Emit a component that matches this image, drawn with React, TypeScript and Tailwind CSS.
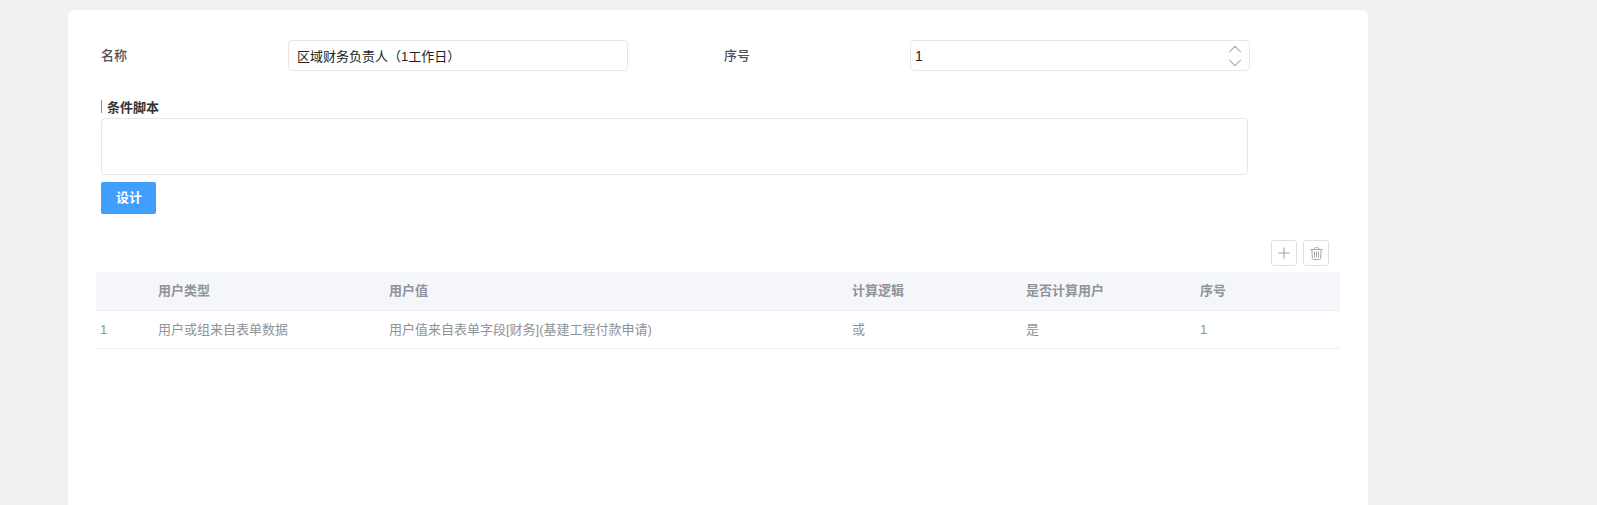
import { ChevronUp, ChevronDown, Plus } from "lucide-react";

const headers = ["", "用户类型", "用户值", "计算逻辑", "是否计算用户", "序号"];
const row = ["1", "用户或组来自表单数据", "用户值来自表单字段[财务](基建工程付款申请)", "或", "是", "1"];

function TrashIcon() {
    return (
        <svg width="13" height="13" viewBox="0 0 13 13" fill="none" stroke="#a3a7ad" strokeWidth="1">
            <path d="M.5 2.5h12M4 2.5C4 1.2 4.8.5 6.5.5S9 1.2 9 2.5" />
            <path d="M1.8 2.5l.6 9c0 .6.4 1 1 1h6.2c.6 0 1-.4 1-1l.6-9" />
            <path d="M4.5 4.5v6M6.5 4.5v6M8.5 4.5v6" />
        </svg>
    );
}

export default function App() {
    return (
        <div className="h-[505px] overflow-hidden bg-[#f1f1f1] pl-[68px] pt-[10px] font-['Liberation_Sans','Noto_Sans_CJK_SC',sans-serif] text-[13px]">
            <div className="h-[600px] w-[1300px] rounded-[6px] bg-white pl-[28px] pr-[28px] pt-[30px]">
                <div className="flex items-center pl-[5px]">
                    <div className="w-[187px] pt-[1px] font-medium text-[#505257]">名称</div>
                    <div className="flex h-[31px] w-[340px] items-center rounded-[4px] border border-[#e8e8e2] pl-[8px] pt-[2px] text-[13px] text-[#222]">
                        区域财务负责人（1工作日）
                    </div>
                    <div className="ml-[96px] w-[186px] pt-[1px] font-medium text-[#505257]">序号</div>
                    <div className="relative flex h-[31px] w-[340px] items-center rounded-[4px] border border-[#e8e8e2] pl-[4px] pt-[2px] text-[14px] text-[#222]">
                        1
                        <div className="absolute right-[3px] top-0 flex h-full flex-col items-center justify-center pt-[1px] text-[#b4b4b4]">
                            <ChevronUp size={22} strokeWidth={1.2} className="-mb-[4px] shrink-0" />
                            <ChevronDown size={22} strokeWidth={1.2} className="-mt-[4px] shrink-0" />
                        </div>
                    </div>
                </div>

                <div className="mt-[29px] pl-[5px]">
                    <div className="h-[13px] border-l border-[#409eff] pl-[5px] text-[13px] font-bold leading-[15px] text-[#333]">条件脚本</div>
                    <div className="mt-[5px] h-[57px] w-[1147px] rounded-[4px] border border-[#e8e8e2]" />
                    <button className="mt-[7px] flex h-[32px] w-[55px] items-center justify-center rounded-[2px] bg-[#409eff] pl-[1px] font-bold text-white">
                        设计
                    </button>
                </div>

                <div className="mt-[26px] flex justify-end gap-[6px] pr-[11px]">
                    <div className="flex h-[26px] w-[26px] items-center justify-center rounded-[3px] border border-[#dcdfe6] text-[#9a9ea5]">
                        <Plus size={18} strokeWidth={1.4} />
                    </div>
                    <div className="flex h-[26px] w-[26px] items-center justify-center rounded-[3px] border border-[#dcdfe6]">
                        <TrashIcon />
                    </div>
                </div>

                <div className="mt-[6px]">
                    <div className="grid h-[39px] grid-cols-[58px_231px_463px_174px_174px_144px] items-center border-b border-[#ebeef5] bg-[#f5f6fa] font-bold text-[#909399]">
                        {headers.map((h, i) => (
                            <div key={i} className="pl-[4px]">{h}</div>
                        ))}
                    </div>
                    <div className="grid h-[38px] grid-cols-[58px_231px_463px_174px_174px_144px] items-center border-b border-[#ebeef5] text-[#909399]">
                        {row.map((c, i) => (
                            <div key={i} className="pl-[4px]">{c}</div>
                        ))}
                    </div>
                </div>
            </div>
        </div>
    );
}
